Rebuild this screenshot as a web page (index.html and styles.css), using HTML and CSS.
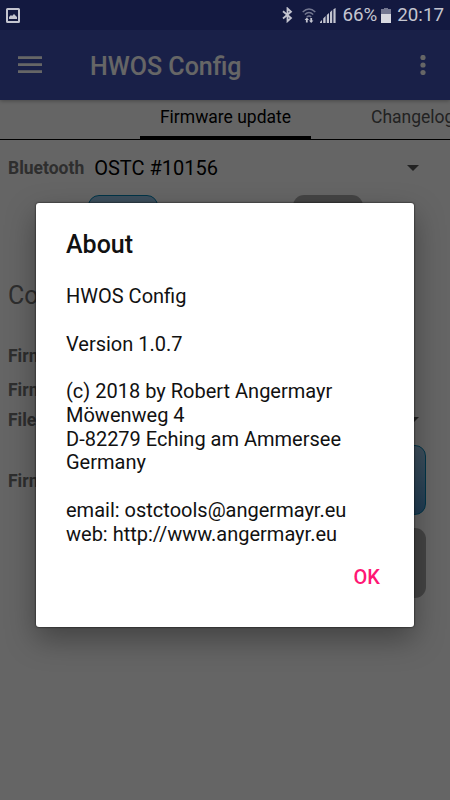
FILE: index.html
```html
<!DOCTYPE html>
<html lang="en">
<head>
<meta charset="utf-8">
<title>HWOS Config</title>
<link rel="stylesheet" href="styles.css">
</head>
<body>
<div class="screen">
  <div class="status">
    <svg class="shot" width="14" height="15" viewBox="0 0 14 15"><rect x="1" y="1" width="12" height="13" rx=".5" fill="none" stroke="#c4c5d0" stroke-width="2"/><path d="M3 11V9l2-2 1 1 2-2 3 3v2z" fill="#c4c5d0"/></svg>
    <svg class="bt" width="11" height="16" viewBox="0 0 11 16"><path d="M1 4.2 9 11 5.5 14.2V1.5L9 4.8 1 11.5" fill="none" stroke="#c4c5d0" stroke-width="1.8"/></svg>
    <svg class="wifi" width="14" height="15" viewBox="0 0 14 15"><g fill="none" stroke="#747891" stroke-width="1.4"><path d="M.7 4Q7-1.8 13.3 4M2.8 6.5q4.2-4 8.4 0M4.8 9q2.2-2.2 4.4 0"/></g><path d="M4.8 9.5 7 12H5.7v2.5H3.9V12H2.6zM9.2 15 7 12.5h1.3V10h1.8v2.5h1.3z" fill="#c4c5d0"/></svg>
    <svg class="signal" width="16" height="15" viewBox="0 0 16 15"><path d="M0 15v-1l2-2v3zM3.2 15v-4.5L5.6 8v7zM6.8 15V7l2.2-2v10zM10 15V4.2L12.2 2v13zM13.4 15V1.2L15.6 0v15z" fill="#c4c5d0"/></svg>
    <span class="pct">66%</span>
    <svg class="batt" width="10" height="15" viewBox="0 0 10 15"><path d="M3 0h4v1h3v5H0V1h3z" fill="#747891"/><path d="M0 6h10v9H0z" fill="#d8d9e0"/></svg>
    <span class="clock">20:17</span>
  </div>
  <header class="toolbar">
    <svg width="24" height="18" viewBox="0 0 24 18"><path d="M0 1.6h24M0 8.6h24M0 15.6h24" stroke="#fff" stroke-width="2.6"/></svg>
    <h1>HWOS Config</h1>
    <svg class="more" width="6" height="20" viewBox="0 0 6 20" fill="#fff"><circle cx="3" cy="2.5" r="2.6"/><circle cx="3" cy="10" r="2.6"/><circle cx="3" cy="17.5" r="2.6"/></svg>
  </header>
  <nav class="tabs">
    <span class="tab active">Firmware update</span>
    <span class="tab next">Changelog</span>
  </nav>
  <main>
    <div class="row device"><b>Bluetooth</b><span class="value">OSTC #10156</span><i class="caret"></i></div>
    <div class="buttons"><div class="btn blue"></div><div class="btn gray"></div></div>
    <h2>Co</h2>
    <div class="row r1"><b>Firm</b></div>
    <div class="row r2"><b>Firm</b></div>
    <div class="row r3"><b>File</b><i class="caret"></i></div>
    <div class="row actions"><b>Firm</b><div class="stack"><div class="btn blue"></div><div class="btn gray"></div></div></div>
  </main>
  <div class="scrim">
    <section class="dialog">
      <h3>About</h3>
      <p>HWOS Config</p>
      <p>Version 1.0.7</p>
      <p>(c) 2018 by Robert Angermayr<br>Möwenweg 4<br>D-82279 Eching am Ammersee<br>Germany</p>
      <p>email: ostctools@angermayr.eu<br>web: http://www.angermayr.eu</p>
      <div class="ok">OK</div>
    </section>
  </div>
</div>
</body>
</html>
```
FILE: styles.css
```css
* { box-sizing: border-box; }
body { margin: 0; font-family: Roboto, sans-serif; }
h1, h2, h3, p { margin: 0; }
.screen { position: relative; width: 450px; height: 800px; overflow: hidden; background: #fdfdfd; }
.status { position: relative; z-index: 2; display: flex; align-items: center; height: 30px; padding: 0 6px; background: #131940; color: #c4c5d0; font-size: 18.75px; line-height: 30px; }
.status svg { flex: none; }
.bt { margin-left: auto; margin-right: 9px; }
.wifi { margin-right: 4px; }
.signal { margin-right: 6px; }
.pct { margin-right: 4px; }
.batt { margin-right: 6px; }
.toolbar { display: flex; align-items: center; height: 70px; padding: 0 24px 0 18px; background: #3f51b5; color: #fff; box-shadow: 0 1px 4px rgba(0,0,0,.3); position: relative; }
.toolbar h1 { margin: 3px 0 0 48px; font-size: 25px; font-weight: 500; }
.toolbar svg { flex: none; }
.toolbar .more { margin-left: auto; }
.tabs { display: flex; height: 40px; border-bottom: 1px solid #000; white-space: nowrap; font-size: 17.5px; line-height: 34px; overflow: hidden; }
.tab { flex: none; color: #555; }
.tab.active { width: 171px; margin-left: 140px; height: 39px; border-bottom: 3px solid #000; text-align: center; color: #000; }
.tab.next { margin-left: 60px; }
.row { display: flex; align-items: center; padding: 0 31px 0 8px; color: #737373; font-size: 17.5px; }
.caret { margin-left: auto; border: 6px solid transparent; border-top-color: #555; border-bottom: 0; }
.device { height: 56px; }
.value { margin-left: 10px; color: #000; font-size: 20px; }
.buttons { display: flex; gap: 135px; margin: -1px 0 0 88px; }
.btn { width: 70px; height: 70px; border-radius: 11px; }
.blue { border: 1px solid #0083b5; background: linear-gradient(#9cc6e6, #4f97cf); }
.gray { background: #ababab; }
h2 { height: 61px; color: #737373; font-size: 25px; font-weight: 400; line-height: 62px; }
main h2 { padding-left: 8px; }
.r1 { height: 60px; }
.r2 { height: 8px; }
.r3 { height: 51px; }
.actions { height: 70px; padding-right: 24px; }
.actions b { margin-top: 2px; }
.stack { display: flex; flex-direction: column; gap: 13px; margin-left: auto; height: 70px; }
.stack .btn { flex: none; }
.scrim { position: absolute; inset: 0; background: rgba(0,0,0,.6); }
.dialog { width: 378px; height: 424px; margin: 203px 0 0 36px; padding: 26px 30px 0; border-radius: 3px; background: #fff; color: #111; box-shadow: 0 0 2px #000, 0 12px 30px rgba(0,0,0,.35); font-size: 20px; line-height: 23.75px; }
.dialog h3 { margin-bottom: 24px; font-size: 25px; font-weight: 500; line-height: 32px; }
.dialog p { margin-bottom: 23.75px; white-space: nowrap; }
.ok { margin: -5px 4px 0 auto; width: max-content; color: #ff1774; font-size: 20px; font-weight: 500; line-height: 24px; }
```
